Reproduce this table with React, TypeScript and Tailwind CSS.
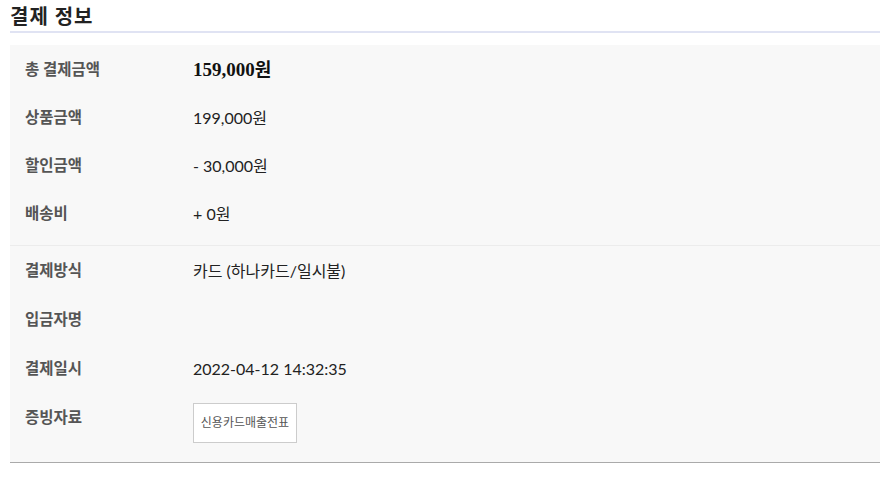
const font = { fontFamily: "Lato, 'Noto Sans CJK KR', sans-serif" };

interface Row {
  label: string;
  value?: string;
  strong?: boolean;
}

const amountRows: Row[] = [
  { label: "총 결제금액", value: "159,000원", strong: true },
  { label: "상품금액", value: "199,000원" },
  { label: "할인금액", value: "- 30,000원" },
  { label: "배송비", value: "+ 0원" },
];

const payRows: Row[] = [
  { label: "결제방식", value: "카드 (하나카드/일시불)" },
  { label: "입금자명", value: "" },
  { label: "결제일시", value: "2022-04-12 14:32:35" },
];

function InfoRow({ row, h }: { row: Row; h: string }) {
  return (
    <div className={`flex items-center ${h}`}>
      <div className="w-[183px] pl-[15px] text-[15.5px] font-bold text-[#555]">{row.label}</div>
      {row.strong ? (
        <div className="text-[19px] font-bold text-[#111]">
          <span className="font-['Liberation_Serif',serif]">159,000</span>
          <span className="text-[18px]">원</span>
        </div>
      ) : (
        <div className="text-[16px] text-[#222]">{row.value}</div>
      )}
    </div>
  );
}

export default function App() {
  return (
    <div className="w-[884px] h-[481px] bg-white px-[10px] pr-[4px]" style={font}>
      <h2 className="pt-[4px] pb-[3px] text-[20px] leading-[24px] tracking-[1px] font-bold text-[#222]">결제 정보</h2>
      <div className="h-[2px] bg-[#e0e3f3]" />
      <div className="mt-[12px] bg-[#f8f8f8] border-b border-[#aaa]">
        <div className="pt-[1px] pb-[7px]">
          {amountRows.map((r) => (
            <InfoRow key={r.label} row={r} h="h-12" />
          ))}
        </div>
        <div className="border-t border-[#ececec]">
          {payRows.map((r) => (
            <InfoRow key={r.label} row={r} h="h-[49px]" />
          ))}
          <div className="flex items-start pt-[10px] pb-[19px]">
            <div className="w-[183px] pl-[15px] mt-[4px] text-[15.5px] leading-5 font-bold text-[#555]">증빙자료</div>
            <button className="h-[40px] w-[104px] border border-[#ccc] bg-white text-[12px] text-[#555]">
              신용카드매출전표
            </button>
          </div>
        </div>
      </div>
    </div>
  );
}
